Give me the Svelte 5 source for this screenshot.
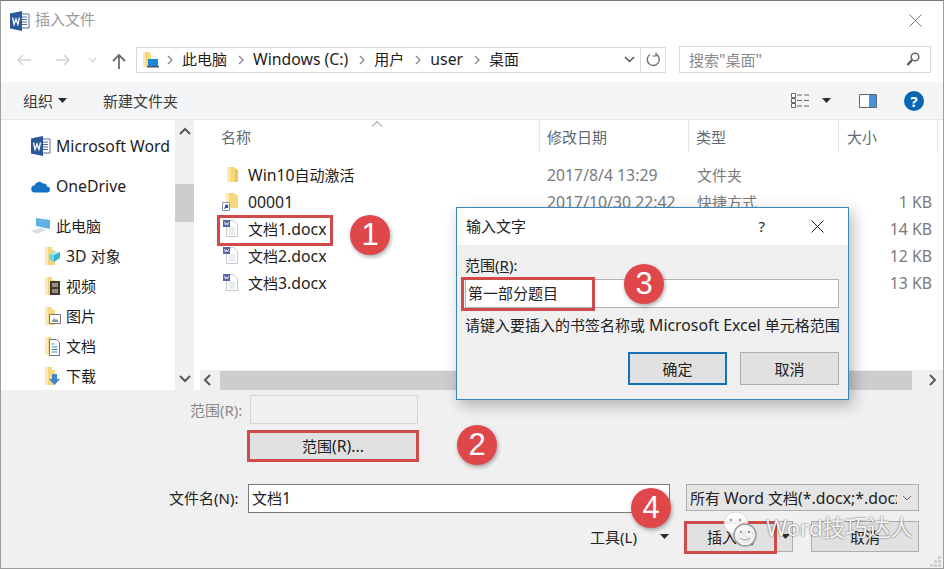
<script lang="ts">
  const crumbs = ["此电脑", "Windows (C:)", "用户", "user", "桌面"];

  const libraries = [
    { label: "3D 对象", kind: "cube" },
    { label: "视频", kind: "film" },
    { label: "图片", kind: "picture" },
    { label: "文档", kind: "doc" },
    { label: "下载", kind: "down" },
  ];

  const files = [
    { name: "Win10自动激活", date: "2017/8/4 13:29", type: "文件夹", size: "", icon: "folder" },
    { name: "00001", date: "2017/10/30 22:42", type: "快捷方式", size: "1 KB", icon: "shortcut" },
    { name: "文档1.docx", date: "", type: "", size: "14 KB", icon: "word" },
    { name: "文档2.docx", date: "", type: "", size: "12 KB", icon: "word" },
    { name: "文档3.docx", date: "", type: "", size: "13 KB", icon: "word" },
  ];

  const badges = [
    { n: 1, x: 370, y: 235 },
    { n: 2, x: 477, y: 445 },
    { n: 3, x: 644, y: 284 },
    { n: 4, x: 651, y: 508 },
  ];

  // Chinese runs are set a bit smaller than the latin ones, as in the Windows UI font
  const parts = (text: string) =>
    (text.match(/[\u4e00-\u9fff]+|[^\u4e00-\u9fff]+/g) ?? []).map((s) => ({
      s,
      zh: /[\u4e00-\u9fff]/.test(s),
    }));
</script>

{#snippet mix(text: string)}{#each parts(text) as p}{#if p.zh}<span class="zh">{p.s}</span>{:else}{p.s}{/if}{/each}{/snippet}

{#snippet wordLogo()}
  <svg width="20" height="20" viewBox="0 0 20 20">
    <path d="M11 3h8v14h-8z" fill="#fff" stroke="#5b6f9c" />
    <path d="M12 6h5M12 8.5h5M12 11h5M12 13.5h5" stroke="#5b6f9c" />
    <path d="M0 2.5 12 0v20L0 17.5z" fill="#2b5797" />
    <path d="M2.5 6.5l1.6 7 1.9-5.5 1.9 5.5 1.6-7" fill="none" stroke="#fff" stroke-width="1.3" />
  </svg>
{/snippet}

{#snippet folderIcon()}
  <svg width="14" height="17" viewBox="0 0 14 17">
    <path d="M1 1h7l4 3v12H1z" fill="#f6d77e" />
    <path d="M1 1h3v15H1z" fill="#fbe9b4" />
    <path d="M9 4h3v12H9z" fill="#f0c55f" />
  </svg>
{/snippet}

{#snippet libIcon(kind: string)}
  <svg width="18" height="20" viewBox="0 0 18 20">
    <path d="M1 1h7v3h3v15H1z" fill="#f6d77e" />
    <path d="M1 1h3v18H1z" fill="#fbeab8" />
    {#if kind === "cube"}
      <path d="M10 9l6-3v6l-6 4-5-3V8z" fill="#35b4cf" />
      <path d="M5 8l5-2.5L16 6l-6 3z" fill="#a8e3ef" />
      <path d="M5 8l5 1v7l-5-3z" fill="#77d2e4" />
    {:else if kind === "film"}
      <path d="M6 5h10v14H6z" fill="#3e3a36" />
      <path d="M8 7h6v4H8zM8 13h6v4H8z" fill="#9a8f7d" />
    {:else if kind === "picture"}
      <path d="M5.500 8.500h11v9h-11z" fill="#fff" stroke="#777" />
      <path d="M7 16l3-4 2 2 1-1 2 3z" fill="#8a9aa5" />
    {:else if kind === "doc"}
      <path d="M5.500 3.500h7l3 3v13h-10z" fill="#fff" stroke="#6a7a88" />
      <path d="M7.500 8h3M7.500 11h6M7.500 13.500h6M7.500 16h6" stroke="#3b8ec4" />
    {:else}
      <path d="M8 8h5v5h3l-5.500 6L5 13h3z" fill="#3f86cf" />
    {/if}
  </svg>
{/snippet}

{#snippet fileIcon(icon: string)}
  {#if icon === "word"}
    <svg width="17" height="19" viewBox="0 0 17 19">
      <path d="M4.500 1.500h7l4 4v12h-11z" fill="#fff" stroke="#c4c8d0" />
      <path d="M7 9h6M7 11h6M7 13h6M7 15h6" stroke="#d5d8de" />
      <path d="M1 1h7v7H1z" fill="#5367a8" />
      <path d="M2.500 3l1 3 1-2 1 2 1-3" fill="none" stroke="#fff" stroke-width=".8" />
    </svg>
  {:else if icon === "shortcut"}
    <svg width="17" height="19" viewBox="0 0 17 19">
      <path d="M4 1h8l4 3v12H4z" fill="#f6d77e" />
      <path d="M4 1h3v15H4z" fill="#fbe9b4" />
      <path d="M0.500 10.500h7v8h-7z" fill="#fff" stroke="#8a97a8" />
      <path d="M2.500 16.500 5 14M3 13.500h2.500V16" fill="none" stroke="#1d4e9e" stroke-width="1.300" />
    </svg>
  {:else}
    <span class="folder-pad">{@render folderIcon()}</span>
  {/if}
{/snippet}

{#snippet caret()}
  <svg class="caret" width="9" height="5" viewBox="0 0 9 5"><path d="M0 0h9L4.500 5z" fill="#2c2c2c" /></svg>
{/snippet}

{#snippet chevron(d: string)}
  <svg width="12" height="12" viewBox="0 0 12 12"><path {d} fill="none" stroke="#5a5a5a" stroke-width="2" /></svg>
{/snippet}

<div class="window">
  <header class="titlebar">
    {@render wordLogo()}
    <span class="title">{@render mix("插入文件")}</span>
    <svg class="close" width="13" height="13" viewBox="0 0 13 13"><path d="M.5.500l12 12M12.500.500l-12 12" stroke="#777" /></svg>
  </header>

  <nav class="navbar">
    <svg class="arrow" width="16" height="12" viewBox="0 0 16 12"><path d="M15 6H2M7 1 2 6l5 5" fill="none" stroke="#cfd3d6" stroke-width="1.500" /></svg>
    <svg class="arrow fwd" width="16" height="12" viewBox="0 0 16 12"><path d="M1 6h13M9 1l5 5-5 5" fill="none" stroke="#cfd3d6" stroke-width="1.500" /></svg>
    <svg class="arrow drop" width="9" height="6" viewBox="0 0 9 6"><path d="M1 1l3.500 3.500L8 1" fill="none" stroke="#cfd3d6" stroke-width="1.300" /></svg>
    <svg class="arrow up" width="14" height="16" viewBox="0 0 14 16"><path d="M7 16V2M1 8l6-6 6 6" fill="none" stroke="#6b6b6b" stroke-width="1.800" /></svg>

    <div class="address">
      <svg class="addr-icon" width="17" height="18" viewBox="0 0 17 18">
        <path d="M1 1h6l1 2h1v13H1z" fill="#f6d77e" />
        <path d="M1 1h2v15H1z" fill="#fbeab8" />
        <path d="M6 8h10v7H6z" fill="#1e88d8" />
        <path d="M5 15h12v1.500H5z" fill="#44505c" />
      </svg>
      {#each crumbs as crumb}
        <svg class="sep" width="6" height="10" viewBox="0 0 6 10"><path d="M1 1l4 4-4 4" fill="none" stroke="#8a8a8a" stroke-width="1.400" /></svg>
        <span class="crumb">{@render mix(crumb)}</span>
      {/each}
      <svg class="addr-drop" width="11" height="7" viewBox="0 0 11 7"><path d="M1 1l4.500 4.500L10 1" fill="none" stroke="#555" stroke-width="1.500" /></svg>
      <span class="refresh">
        <svg width="15" height="15" viewBox="0 0 15 15"><path d="M10 2.200A6 6 0 1 1 4 2.500" fill="none" stroke="#6f6f6f" stroke-width="1.400" /><path d="M3.500 .5v3.500H0" fill="none" stroke="#6f6f6f" stroke-width="1.200" transform="translate(6.500 0)" /></svg>
      </span>
    </div>

    <div class="search">
      <span>{@render mix('搜索"桌面"')}</span>
      <svg width="14" height="15" viewBox="0 0 14 15"><circle cx="9" cy="5" r="3.800" fill="none" stroke="#666" stroke-width="1.500" /><path d="M6 8l-4.500 5" stroke="#555" stroke-width="2.200" /></svg>
    </div>
  </nav>

  <div class="toolbar">
    <span class="tool-btn">{@render mix("组织")}</span>
    {@render caret()}
    <span class="tool-btn new-folder">{@render mix("新建文件夹")}</span>
    <svg class="views" width="18" height="16" viewBox="0 0 18 16">
      <path d="M.5.500h4v4h-4zM.5 5.500h4v4h-4zM.5 10.500h4v4h-4z" fill="#fff" stroke="#666" />
      <path d="M6 2h5M13 2h5M6 7.500h5M13 7.500h5M6 13h5M13 13h5" stroke="#666" />
    </svg>
    <span class="views-caret">{@render caret()}</span>
    <svg class="pane" width="18" height="14" viewBox="0 0 18 14">
      <path d="M.5.500h17v13H.5z" fill="#fff" stroke="#666" />
      <path d="M10 1h7v12h-7z" fill="#3f95dd" />
    </svg>
    <span class="help">?</span>
  </div>

  <div class="browser">
    <aside class="sidebar">
      <div class="side-item top">
        <span class="side-icon">{@render wordLogo()}</span>
        <span>Microsoft Word</span>
      </div>
      <div class="side-item">
        <span class="side-icon">
          <svg width="19" height="13" viewBox="0 0 19 13"><path d="M4 12.500a3.500 3.500 0 0 1-.5-7A5 5 0 0 1 12 3.500a3.500 3.500 0 0 1 4 3 3 3 0 0 1 0 6z" fill="#1474c4" /></svg>
        </span>
        <span>OneDrive</span>
      </div>
      <div class="side-item">
        <span class="side-icon">
          <svg width="20" height="18" viewBox="0 0 20 18">
            <path d="M5 1l14 2v9L5 9z" fill="#5fb3e4" />
            <path d="M0 14l10-3 5 2-9 4z" fill="#d9dde0" />
          </svg>
        </span>
        <span>{@render mix("此电脑")}</span>
      </div>
      {#each libraries as lib}
        <div class="side-item child">
          <span class="lib-icon">{@render libIcon(lib.kind)}</span>
          <span>{@render mix(lib.label)}</span>
        </div>
      {/each}
    </aside>

    <div class="vscroll">
      {@render chevron("M1 8l5-5 5 5")}
      <div class="vthumb"></div>
      {@render chevron("M1 4l5 5 5-5")}
    </div>

    <section class="listing">
      <div class="columns">
        <span class="col name-col">{@render mix("名称")}
          <svg class="sort" width="12" height="6" viewBox="0 0 12 6"><path d="M1 5.500l5-5 5 5" fill="none" stroke="#777" /></svg>
        </span>
        <span class="col">{@render mix("修改日期")}</span>
        <span class="col">{@render mix("类型")}</span>
        <span class="col">{@render mix("大小")}</span>
      </div>

      <div class="rows">
        {#each files as file}
          <div class="row">
            <span class="name-cell">
              <span class="file-icon">{@render fileIcon(file.icon)}</span>
              <span>{@render mix(file.name)}</span>
            </span>
            <span class="meta">{file.date}</span>
            <span class="meta">{@render mix(file.type)}</span>
            <span class="meta size">{file.size}</span>
          </div>
        {/each}
      </div>

      <div class="hscroll">
        {@render chevron("M8 1L3 6l5 5")}
        <div class="hthumb"></div>
        {@render chevron("M4 1l5 5-5 5")}
      </div>
    </section>
  </div>

  <footer class="bottom">
    <div class="range-row">
      <span class="range-label">{@render mix("范围(R):")}</span>
      <div class="range-input"></div>
    </div>
    <button class="range-btn" type="button">{@render mix("范围(R)...")}</button>

    <div class="name-row">
      <span class="name-label">{@render mix("文件名(N):")}</span>
      <div class="name-input">{@render mix("文档1")}</div>
      <div class="type-select">
        <span class="type-text">{@render mix("所有 Word 文档(*.docx;*.docx)")}</span>
        <svg width="10" height="6" viewBox="0 0 10 6"><path d="M1 1l4 4 4-4" fill="none" stroke="#666" /></svg>
      </div>
    </div>

    <div class="action-row">
      <span class="tools">{@render mix("工具(L)")}</span>
      <span class="tools-caret">{@render caret()}</span>
      <div class="split">
        <span class="split-main">{@render mix("插入(S)")}</span>
        <span class="split-arrow">{@render caret()}</span>
      </div>
      <button class="cancel" type="button">{@render mix("取消")}</button>
    </div>
    <svg class="grip" width="11" height="11" viewBox="0 0 11 11"><path d="M8 0h3v3H8zM4 4h3v3H4zM8 4h3v3H8zM0 8h3v3H0zM4 8h3v3H4zM8 8h3v3H8z" fill="#cfcfcf" /></svg>
  </footer>
</div>

<div class="text-dialog">
  <div class="dlg-title">
    <span>{@render mix("输入文字")}</span>
    <span class="dlg-q">?</span>
    <svg width="13" height="13" viewBox="0 0 13 13"><path d="M.5.500l12 12M12.500.500l-12 12" stroke="#222" /></svg>
  </div>
  <div class="dlg-body">
    <div class="dlg-label"><span class="zh">范围</span>(<u>R</u>):</div>
    <div class="dlg-input">{@render mix("第一部分题目")}</div>
    <div class="dlg-help">{@render mix("请键入要插入的书签名称或 Microsoft Excel 单元格范围")}</div>
    <div class="dlg-actions">
      <button class="dlg-btn primary" type="button">{@render mix("确定")}</button>
      <button class="dlg-btn" type="button">{@render mix("取消")}</button>
    </div>
  </div>
</div>

<div class="mark mark-file"></div>
<div class="mark mark-range"></div>
<div class="mark mark-input"></div>
<div class="mark mark-insert"></div>

{#each badges as badge}
  <div class="badge" style={`left: ${badge.x - 20}px; top: ${badge.y - 20}px;`}>{badge.n}</div>
{/each}

<div class="watermark">
  <svg width="36" height="38" viewBox="0 0 36 38">
    <ellipse cx="15" cy="13" rx="12" ry="11" fill="#fff" fill-opacity=".9" stroke="#bbb" stroke-opacity=".5" />
    <ellipse cx="24" cy="25" rx="11" ry="11" fill="#f6f6f6" fill-opacity=".9" stroke="#999" stroke-width="1.400" />
    <circle cx="10" cy="10" r="1.300" fill="#999" />
    <circle cx="19" cy="10" r="1.300" fill="#999" />
    <circle cx="20" cy="22" r="1.200" fill="#999" />
    <circle cx="28" cy="22" r="1.200" fill="#999" />
    <path d="M19 28q5 4 10 0" fill="none" stroke="#999" />
  </svg>
  <span class="mark-text">Word技巧达人</span>
</div>

<style>
  :global(body) {
    margin: 0;
    overflow: hidden;
    background: #fff;
  }

  :global(#app) {
    position: relative;
    width: 944px;
    height: 569px;
    overflow: hidden;
    font-family: "Noto Sans", "Noto Sans CJK SC", sans-serif;
    font-size: 15.8px;
    color: #222;
  }

  .zh {
    font-size: 15px;
  }

  .window {
    box-sizing: border-box;
    width: 944px;
    height: 569px;
    display: flex;
    flex-direction: column;
    border: 1px solid #9d9d9d;
    border-top-color: #777;
    background: #fff;
  }

  .titlebar {
    height: 39px;
    flex: none;
    display: flex;
    align-items: center;
    padding: 0 21px 0 9px;
    gap: 5px;
  }

  .title {
    color: #9a9a9a;
    margin-top: -3px;
  }

  .close {
    margin-left: auto;
  }

  .navbar {
    height: 42px;
    flex: none;
    display: flex;
    align-items: center;
    padding-bottom: 3px;
    box-sizing: border-box;
  }

  .arrow {
    flex: none;
    margin-left: 15px;
  }

  .arrow.fwd {
    margin-left: 23px;
  }

  .arrow.drop {
    margin-left: 17px;
  }

  .arrow.up {
    margin-left: 15px;
    margin-top: 3px;
  }

  .address {
    box-sizing: border-box;
    width: 530px;
    height: 26px;
    margin-left: 10px;
    border: 1px solid #d9d9d9;
    display: flex;
    align-items: center;
    padding-left: 5px;
    flex: none;
  }

  .addr-icon {
    flex: none;
    margin-right: 8px;
  }

  .sep {
    flex: none;
    margin: 0 9px 0 0;
  }

  .crumb {
    margin-right: 11px;
    padding-bottom: 2px;
    color: #1d1d1d;
  }

  .addr-drop {
    margin-left: auto;
    margin-right: 5px;
  }

  .refresh {
    width: 24px;
    height: 24px;
    border-left: 1px solid #d9d9d9;
    display: flex;
    align-items: center;
    justify-content: center;
  }

  .search {
    box-sizing: border-box;
    width: 252px;
    height: 27px;
    margin-left: 13px;
    border: 1px solid #d9d9d9;
    display: flex;
    align-items: center;
    justify-content: space-between;
    padding: 0 10px 0 9px;
    color: #8a8a8a;
    flex: none;
  }

  .toolbar {
    height: 38px;
    flex: none;
    background: #f3f5f6;
    border-bottom: 1px solid #e4e6e8;
    box-sizing: border-box;
    display: flex;
    align-items: center;
    padding-left: 22px;
    color: #3a3a3a;
  }

  .caret {
    flex: none;
    display: block;
    margin-left: 5px;
  }

  .new-folder {
    margin-left: 36px;
  }

  .views {
    margin-left: 613px;
  }

  .views-caret {
    margin-left: 8px;
  }

  .pane {
    margin-left: 28px;
  }

  .help {
    width: 20px;
    height: 20px;
    margin-left: 27px;
    border-radius: 50%;
    background: #0a66b4;
    color: #fff;
    font-size: 15px;
    font-weight: 700;
    line-height: 20px;
    text-align: center;
    flex: none;
  }

  .browser {
    height: 270px;
    flex: none;
    display: flex;
  }

  .sidebar {
    width: 174px;
    flex: none;
    padding-top: 11px;
    box-sizing: border-box;
    overflow: hidden;
  }

  .side-item {
    height: 30px;
    display: flex;
    align-items: center;
    margin-top: 10px;
    white-space: nowrap;
    color: #1d1d1d;
  }

  .side-item.top {
    margin-top: 0;
  }

  .side-item.child {
    margin-top: 0;
    padding-left: 43px;
  }

  .side-icon {
    width: 25px;
    margin-left: 30px;
    display: flex;
    flex: none;
  }

  .lib-icon {
    width: 22px;
    display: flex;
    flex: none;
  }

  .vscroll {
    width: 19px;
    flex: none;
    background: #f0f0f0;
    display: flex;
    flex-direction: column;
    align-items: center;
    padding: 6px 0;
    box-sizing: border-box;
    justify-content: flex-start;
  }

  .vthumb {
    width: 19px;
    height: 38px;
    margin: 46px 0 auto;
    background: #cdcdcd;
  }

  .listing {
    flex: 1;
    min-width: 0;
    display: flex;
    flex-direction: column;
    padding-left: 6px;
    box-sizing: border-box;
  }

  .columns {
    height: 32px;
    flex: none;
    display: grid;
    grid-template-columns: 340px 149px 150px 99px;
    align-items: stretch;
    color: #5f6a72;
  }

  .col {
    display: flex;
    align-items: center;
    padding-left: 7px;
    border-right: 1px solid #e6e6e6;
    position: relative;
  }

  .col:last-child {
    padding-left: 8px;
  }

  .name-col {
    padding-left: 21px;
  }

  .sort {
    position: absolute;
    left: 171px;
    top: 1px;
  }

  .rows {
    flex: 1;
    padding-top: 9px;
  }

  .row {
    height: 27px;
    display: grid;
    grid-template-columns: 340px 150px 150px 92px;
    align-items: center;
    white-space: nowrap;
  }

  .name-cell {
    display: flex;
    align-items: center;
    padding-left: 22px;
    color: #1d1d1d;
  }

  .file-icon {
    width: 26px;
    display: flex;
    flex: none;
  }

  .folder-pad {
    display: flex;
    padding-left: 4px;
  }

  .meta {
    color: #7a7a7a;
    padding-left: 7px;
  }

  .size {
    text-align: right;
    padding: 0;
  }

  .hscroll {
    height: 20px;
    flex: none;
    background: #f0f0f0;
    display: flex;
    align-items: center;
    margin-left: 0;
    padding: 0 5px 0 2px;
    box-sizing: border-box;
  }

  .hthumb {
    width: 692px;
    height: 19px;
    margin: 0 auto 0 6px;
    background: #cdcdcd;
  }

  .bottom {
    flex: 1;
    background: #f0f0f0;
    position: relative;
    display: flex;
    flex-direction: column;
    padding-top: 5px;
    box-sizing: border-box;
    min-height: 0;
  }

  .range-row {
    display: flex;
    align-items: center;
    padding-left: 189px;
  }

  .range-label {
    color: #8a8a8a;
    width: 60px;
    white-space: nowrap;
    font-size: 15px;
  }

  .range-input {
    width: 168px;
    height: 29px;
    box-sizing: border-box;
    border: 1px solid #d5d5d5;
  }

  .range-btn {
    width: 170px;
    height: 30px;
    margin: 7px 0 0 247px;
    border: 1px solid #adadad;
    background: #e1e1e1;
    font: inherit;
    color: #222;
    padding: 0;
  }

  .name-row {
    display: flex;
    margin-top: 23px;
    padding-left: 168px;
    align-items: flex-start;
  }

  .name-label {
    width: 79px;
    flex: none;
    line-height: 29px;
    white-space: nowrap;
    font-size: 15px;
  }

  .name-input {
    box-sizing: border-box;
    width: 422px;
    height: 29px;
    border: 1px solid #7a7a7a;
    background: #fff;
    line-height: 27px;
    padding-left: 3px;
    flex: none;
  }

  .type-select {
    box-sizing: border-box;
    width: 233px;
    height: 27px;
    margin-left: 16px;
    border: 1px solid #adadad;
    background: #e5e5e5;
    display: flex;
    align-items: center;
    padding: 0 5px 0 3px;
    flex: none;
  }

  .type-text {
    width: 207px;
    overflow: hidden;
    white-space: nowrap;
    margin-right: 5px;
  }

  .action-row {
    display: flex;
    align-items: center;
    margin-top: 8px;
    padding-left: 589px;
    height: 31px;
  }

  .tools {
    width: 47px;
    white-space: nowrap;
    font-size: 15px;
  }

  .tools-caret {
    margin-left: 18px;
  }

  .split {
    box-sizing: border-box;
    width: 108px;
    height: 31px;
    margin-left: 16px;
    border: 1px solid #adadad;
    background: #e1e1e1;
    display: flex;
    align-items: center;
  }

  .split-main {
    width: 90px;
    text-align: center;
    white-space: nowrap;
  }

  .cancel {
    box-sizing: border-box;
    width: 108px;
    height: 31px;
    margin-left: 18px;
    border: 1px solid #adadad;
    background: #e1e1e1;
    font: inherit;
    color: #222;
    padding: 0;
  }

  .grip {
    position: absolute;
    right: 2px;
    bottom: 1px;
  }

  .text-dialog {
    position: absolute;
    left: 456px;
    top: 207px;
    width: 393px;
    height: 193px;
    box-sizing: border-box;
    border: 1px solid #3c86b8;
    background: #f0f0f0;
    box-shadow: 4px 5px 14px rgba(0, 0, 0, 0.28);
    display: flex;
    flex-direction: column;
  }

  .dlg-title {
    height: 37px;
    flex: none;
    background: #fff;
    display: flex;
    align-items: center;
    padding: 0 24px 1px 9px;
    box-sizing: border-box;
  }

  .dlg-q {
    margin-left: auto;
    margin-right: 46px;
    font-size: 15px;
  }

  .dlg-body {
    flex: 1;
    padding: 9px 9px 0 8px;
  }

  .dlg-label {
    line-height: 22px;
    font-size: 15px;
  }

  .dlg-input {
    box-sizing: border-box;
    width: 374px;
    height: 29px;
    margin-top: 3px;
    border: 1px solid #b4b4b4;
    background: #fff;
    line-height: 27px;
    padding-left: 2px;
  }

  .dlg-help {
    margin-top: 6px;
    line-height: 22px;
    white-space: nowrap;
  }

  .dlg-actions {
    display: flex;
    justify-content: flex-end;
    gap: 13px;
    margin-top: 16px;
  }

  .dlg-btn {
    box-sizing: border-box;
    width: 99px;
    height: 33px;
    border: 1px solid #adadad;
    background: #e1e1e1;
    font: inherit;
    color: #222;
    padding: 0;
  }

  .dlg-btn.primary {
    border: 2px solid #1371b5;
  }

  .mark {
    position: absolute;
    box-sizing: border-box;
    border: 3px solid #cf4a48;
  }

  .mark-file {
    left: 217px;
    top: 215px;
    width: 116px;
    height: 31px;
  }

  .mark-range {
    left: 247px;
    top: 430px;
    width: 172px;
    height: 32px;
  }

  .mark-input {
    left: 461px;
    top: 277px;
    width: 134px;
    height: 34px;
  }

  .mark-insert {
    left: 684px;
    top: 521px;
    width: 93px;
    height: 33px;
  }

  .badge {
    position: absolute;
    width: 40px;
    height: 40px;
    border-radius: 50%;
    background: #e0474a;
    box-shadow: 1px 2px 4px rgba(0, 0, 0, 0.35);
    color: #fff;
    font-family: "Liberation Sans", sans-serif;
    font-size: 31px;
    line-height: 40px;
    text-align: center;
  }

  .watermark {
    position: absolute;
    left: 721px;
    top: 510px;
    display: flex;
    align-items: center;
    gap: 9px;
    color: rgba(255, 255, 255, 0.95);
    font-size: 22.5px;
    white-space: nowrap;
    text-shadow: 0 0 2px rgba(0, 0, 0, 0.7);
  }

  .mark-text {
    margin-top: -6px;
  }
</style>
